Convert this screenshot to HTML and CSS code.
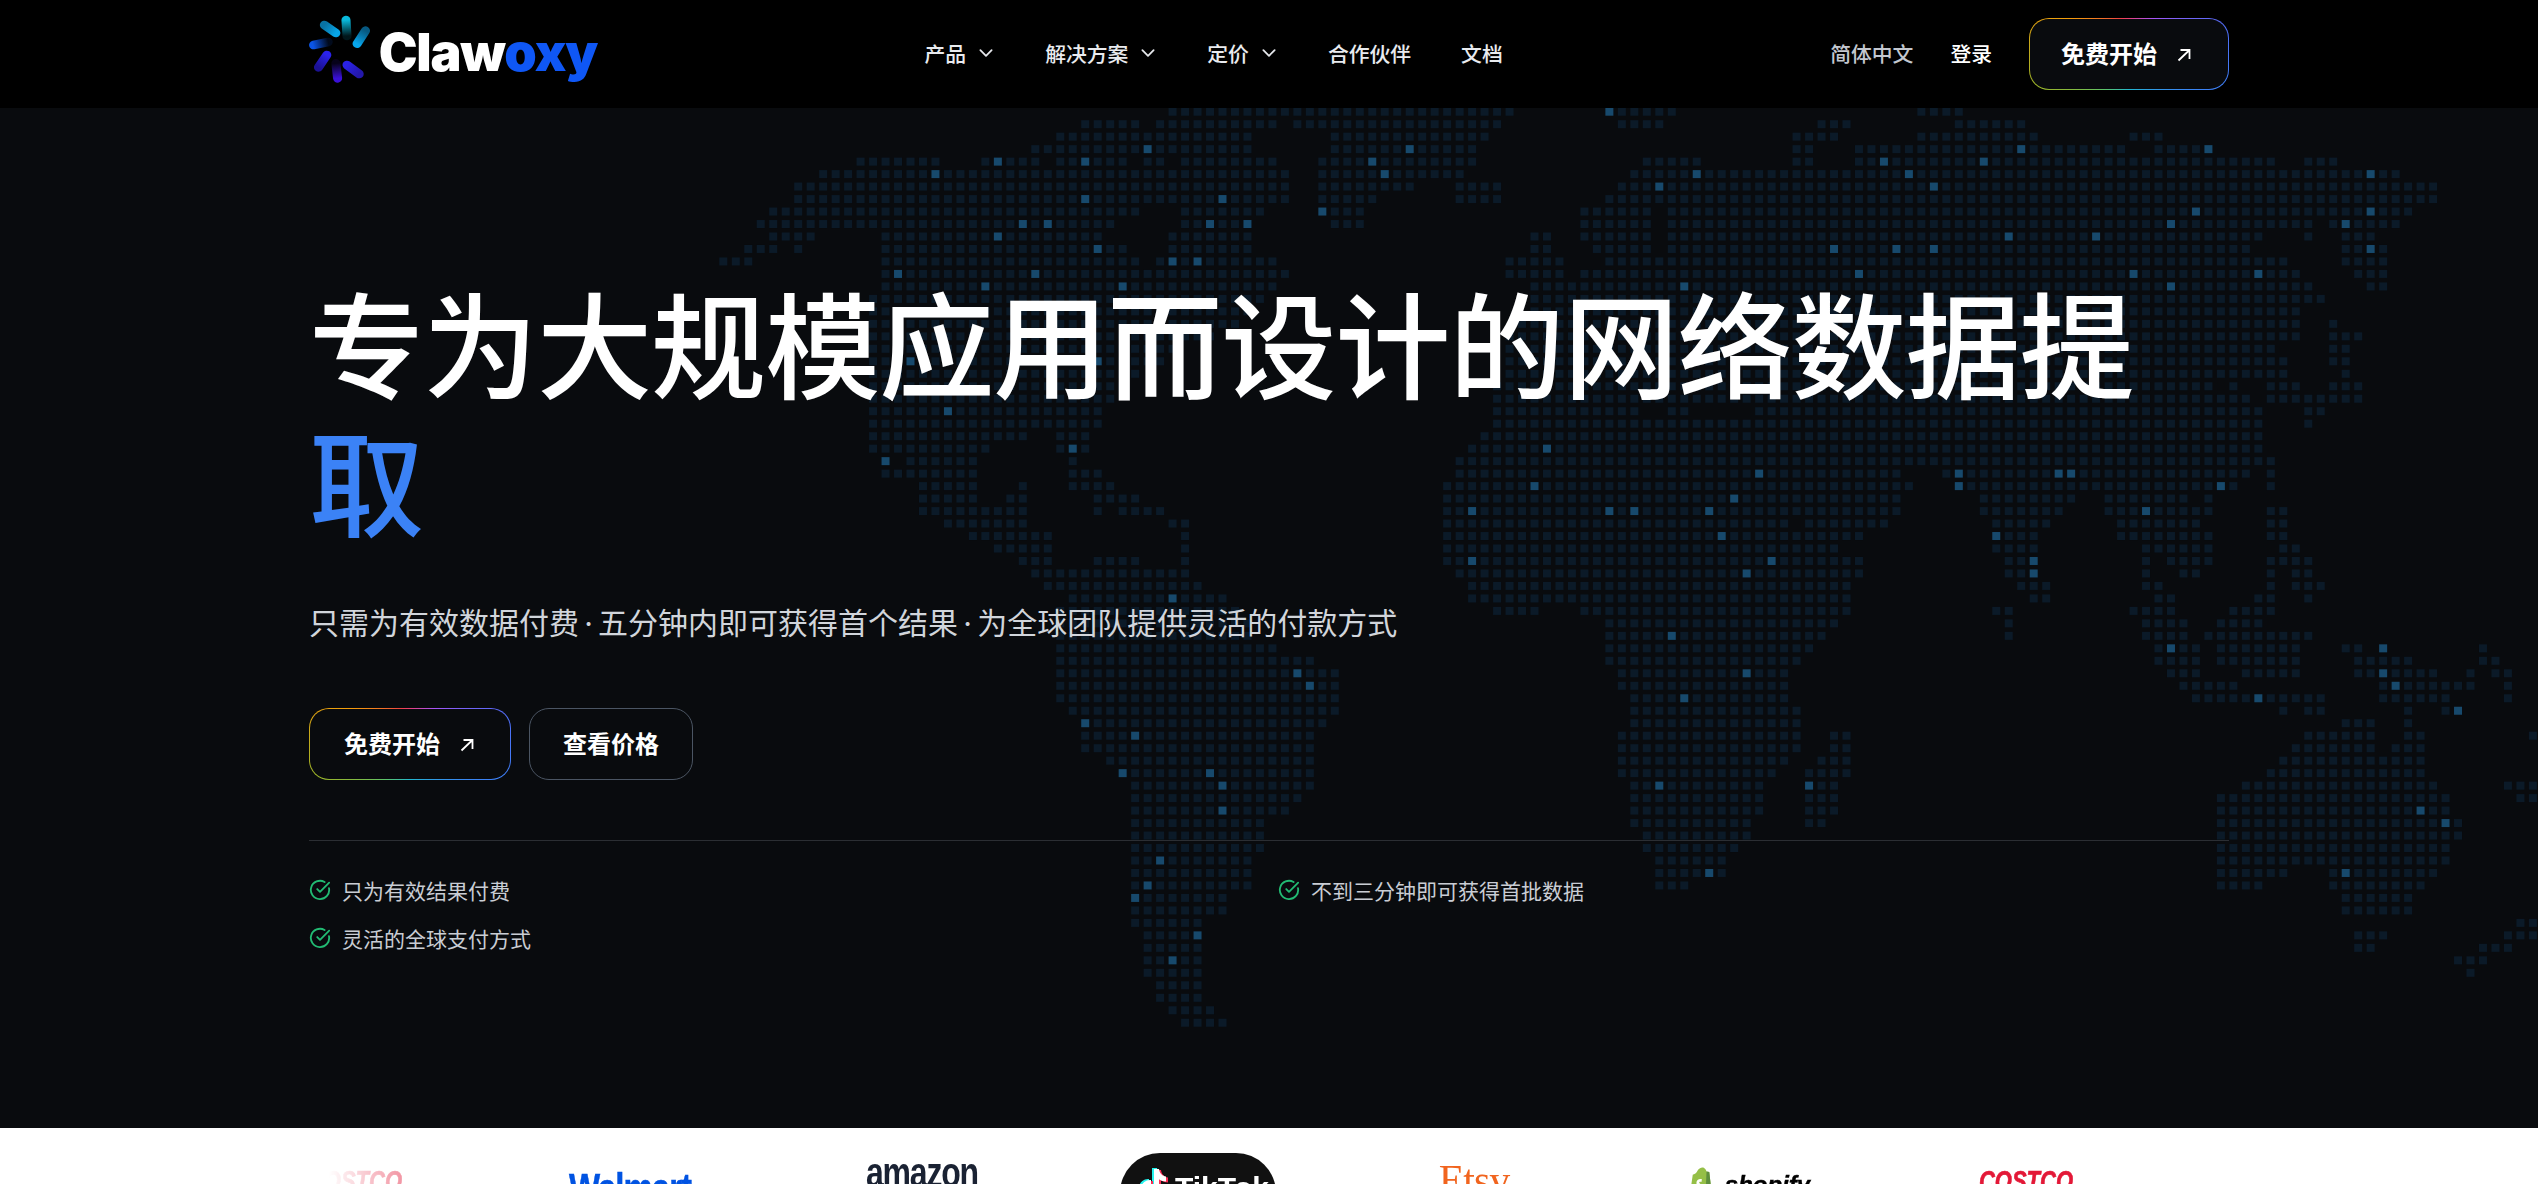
FILE: index.html
```html
<!DOCTYPE html>
<html lang="zh-CN">
<head>
    <meta charset="utf-8">
    <title>Clawoxy</title>
    <link rel="stylesheet" href="styles.css">
</head>
<body>
    <header class="topbar">
        <div class="wrap topbar-inner">
            <a class="brand" href="#">
                <svg class="brand-mark" viewBox="78 42 180 210" preserveAspectRatio="none">
                    <defs>
                        <linearGradient id="r1" gradientUnits="userSpaceOnUse" x1="187" y1="60" x2="190" y2="108"><stop offset="0" stop-color="#09b9dc"/><stop offset="1" stop-color="#09b9dc" stop-opacity=".12"/></linearGradient>
                        <linearGradient id="r2" gradientUnits="userSpaceOnUse" x1="219" y1="131" x2="243" y2="92"><stop offset="0" stop-color="#07a6ec"/><stop offset="1" stop-color="#0a7fb8" stop-opacity=".7"/></linearGradient>
                        <linearGradient id="r3" gradientUnits="userSpaceOnUse" x1="158" y1="99" x2="125" y2="75"><stop offset="0" stop-color="#07a6e8"/><stop offset="1" stop-color="#0a86c0" stop-opacity=".85"/></linearGradient>
                        <linearGradient id="r4" gradientUnits="userSpaceOnUse" x1="92" y1="135" x2="136" y2="125"><stop offset="0" stop-color="#0b55e6"/><stop offset="1" stop-color="#0b55e6" stop-opacity=".12"/></linearGradient>
                        <linearGradient id="r5" gradientUnits="userSpaceOnUse" x1="132" y1="165" x2="108" y2="202"><stop offset="0" stop-color="#2a22ee"/><stop offset="1" stop-color="#2216b8" stop-opacity=".8"/></linearGradient>
                        <linearGradient id="r6" gradientUnits="userSpaceOnUse" x1="163" y1="235" x2="158" y2="190"><stop offset="0" stop-color="#3a10d8"/><stop offset="1" stop-color="#3a10d8" stop-opacity=".12"/></linearGradient>
                        <linearGradient id="r7" gradientUnits="userSpaceOnUse" x1="190" y1="195" x2="225" y2="222"><stop offset="0" stop-color="#2a22e6"/><stop offset="1" stop-color="#2a1cc8" stop-opacity=".85"/></linearGradient>
                    </defs>
                    <g fill="none" stroke-width="26" stroke-linecap="round">
                        <path stroke="url(#r1)" d="M187 60 190 108"/>
                        <path stroke="url(#r2)" d="M219 131 243 92"/>
                        <path stroke="url(#r3)" d="M158 99 125 75"/>
                        <path stroke="url(#r4)" d="M94 135 136 126"/>
                        <path stroke="url(#r5)" d="M132 165 108 202"/>
                        <path stroke="url(#r6)" d="M163 235 158 190"/>
                        <path stroke="url(#r7)" d="M190 195 225 222"/>
                    </g>
                </svg>
                <span class="brand-name">Claw<span class="brand-accent">oxy</span></span>
            </a>
            <nav class="nav">
                <a class="nav-link" href="#">产品<svg class="chev" viewBox="0 0 16 16"><path d="M3 5.500 8 10.500 13 5.500"/></svg></a>
                <a class="nav-link" href="#">解决方案<svg class="chev" viewBox="0 0 16 16"><path d="M3 5.500 8 10.500 13 5.500"/></svg></a>
                <a class="nav-link" href="#">定价<svg class="chev" viewBox="0 0 16 16"><path d="M3 5.500 8 10.500 13 5.500"/></svg></a>
                <a class="nav-link" href="#">合作伙伴</a>
                <a class="nav-link" href="#">文档</a>
            </nav>
            <div class="top-actions">
                <a class="lang" href="#">简体中文</a>
                <a class="login" href="#">登录</a>
                <a class="btn btn-rainbow btn-dark" href="#">免费开始<svg class="arrow" viewBox="0 0 14 14"><path d="M1.500 12.500 12.500 2M3.500 2H12.500V11"/></svg></a>
            </div>
        </div>
    </header>

    <section class="hero">
        <svg class="world" id="world" width="2538" height="1020"></svg>
        <div class="wrap hero-inner">
            <h1 class="title">专为大规模应用而设计的网络数据提<span class="title-accent">取</span></h1>
            <p class="lead">只需为有效数据付费 · 五分钟内即可获得首个结果 · 为全球团队提供灵活的付款方式</p>
            <div class="cta">
                <a class="btn btn-rainbow" href="#">免费开始<svg class="arrow" viewBox="0 0 14 14"><path d="M1.500 12.500 12.500 2M3.500 2H12.500V11"/></svg></a>
                <a class="btn btn-outline" href="#">查看价格</a>
            </div>
            <ul class="perks">
                <li class="perk"><svg class="check" viewBox="0 0 24 24"><path d="M21.800 10A10 10 0 1 1 17 3.300"/><path d="m9 11 3 3L22 4"/></svg>只为有效结果付费</li>
                <li class="perk"><svg class="check" viewBox="0 0 24 24"><path d="M21.800 10A10 10 0 1 1 17 3.300"/><path d="m9 11 3 3L22 4"/></svg>不到三分钟即可获得首批数据</li>
                <li class="perk"><svg class="check" viewBox="0 0 24 24"><path d="M21.800 10A10 10 0 1 1 17 3.300"/><path d="m9 11 3 3L22 4"/></svg>灵活的全球支付方式</li>
            </ul>
        </div>
    </section>

    <section class="brands">
        <div class="wrap brands-window">
            <div class="brands-track">
                <div class="brand-cell cell-first"><span class="costco">COSTCO</span></div>
                <div class="brand-cell cell-walmart"><span class="walmart">Walmart</span></div>
                <div class="brand-cell"><span class="amazon">amazon</span></div>
                <div class="brand-cell">
                    <span class="tiktok">
                        <svg class="tiktok-note" viewBox="0 0 30 34">
                            <path fill="#25f4ee" d="M14 2h5c.5 4 3 7 7 7.500v5c-2.500 0-5-.8-7-2.200V22a9 9 0 1 1-8-9v5a4 4 0 1 0 3 4z"/>
                            <path fill="#fe2c55" d="M18 4h5c.5 4 3 7 7 7.500v5c-2.500 0-5-.8-7-2.200V24a9 9 0 1 1-8-9v5a4 4 0 1 0 3 4z"/>
                            <path fill="#fff" d="M16 3h5c.5 4 3 7 7 7.500v5c-2.500 0-5-.8-7-2.200V23a9 9 0 1 1-8-9v5a4 4 0 1 0 3 4z"/>
                        </svg>
                        <span class="tiktok-name">TikTok</span>
                    </span>
                </div>
                <div class="brand-cell"><span class="etsy">Etsy</span></div>
                <div class="brand-cell">
                    <span class="shopify">
                        <svg class="shopify-bag" viewBox="0 0 24 34">
                            <path fill="#95bf47" d="M3 9c3-1 4-2 5-4 1.500-3 5-4.500 7-3.500 1.500.8 2.500 2 3 4l3 .5L24 32 1 34 0 30z"/>
                            <path fill="#5e8e3e" d="M18 5.500 21 6l3 26-7 2z"/>
                            <path fill="#fff" d="M13 14c-3-1-6 1-6 4 0 3 4 3 4 5 0 1-2 1-3 0l-1 3c3 2 7 0 7-3 0-3-4-4-4-5.500 0-1 1.500-1 2.500-.5z"/>
                        </svg>
                        <span class="shopify-name">shopify</span>
                    </span>
                </div>
                <div class="brand-cell"><span class="costco">COSTCO</span></div>
            </div>
        </div>
    </section>
    <script src="map.js"></script>
</body>
</html>
```

FILE: styles.css
```css
*{
    box-sizing: border-box;
    margin: 0;
    padding: 0;
}
html, body{
    height: 100%;
    overflow: hidden;
}
body{
    background: #090b0e;
    color: #fff;
    font-family: Inter, "Noto Sans CJK SC", sans-serif;
}
a{
    color: inherit;
    text-decoration: none;
}
.wrap{
    width: 1920px;
    margin: 0 auto;
}

/* top bar */
.topbar{
    height: 108px;
    background: #000;
}
.topbar-inner{
    height: 100%;
    display: flex;
    align-items: center;
    justify-content: space-between;
}
.brand{
    display: flex;
    align-items: center;
    gap: 8px;
    width: 288px;
}
.brand-mark{
    width: 64px;
    height: 70px;
    margin-left: -1px;
    margin-top: -10px;
}
.brand-name{
    font-size: 52px;
    font-weight: 900;
    letter-spacing: -1.200px;
    line-height: 1;
    margin-top: -3px;
}
.brand-accent{
    color: #0f57f5;
}
.nav{
    display: flex;
    align-items: center;
    gap: 50px;
    margin-bottom: 2px;
}
.nav-link{
    display: flex;
    align-items: center;
    gap: 11px;
    font-size: 20.800px;
    font-weight: 500;
    color: #e9ebef;
}
.chev{
    width: 18px;
    height: 18px;
    fill: none;
    stroke: #e5e7eb;
    stroke-width: 1.600;
    stroke-linecap: round;
    stroke-linejoin: round;
}
.top-actions{
    display: flex;
    align-items: center;
}
.lang{
    font-size: 20.800px;
    font-weight: 500;
    color: #c3c7cf;
    margin-bottom: 2px;
}
.login{
    font-size: 20.800px;
    font-weight: 500;
    margin: 0 37px 2px;
}

/* buttons */
.btn{
    display: inline-flex;
    align-items: center;
    justify-content: center;
    height: 72px;
    padding: 0 36px 4px 34px;
    border-radius: 20px;
    border: 1px solid transparent;
    font-size: 24px;
    font-weight: 700;
}
.btn-rainbow{
    background:
        linear-gradient(#090b0e, #090b0e) padding-box,
        conic-gradient(#e8407a 0deg, #a855f7 35deg, #4f6ef7 75deg, #3b82f6 115deg, #22b8cf 180deg, #5cc46a 215deg, #9ab52a 250deg, #d9a514 285deg, #f59e0b 300deg, #ef4444 345deg, #e8407a 360deg) border-box;
}
.btn-dark{
    width: 200px;
    padding: 0 0 4px 31px;
    justify-content: flex-start;
}
.btn-outline{
    padding: 0 33px 4px;
    border-color: #4b5563;
}
.arrow{
    width: 14px;
    height: 14px;
    margin-left: 20px;
    margin-top: 5px;
    fill: none;
    stroke: #fff;
    stroke-width: 1.800;
}

/* hero */
.hero{
    position: relative;
    height: 1020px;
    overflow: hidden;
}
.world{
    position: absolute;
    top: 0;
    left: 0;
}
.dot{
    fill: #0b1a28;
}
.dot-hot{
    fill: #17496c;
}
.hero-inner{
    position: relative;
    padding-top: 171px;
}
.title{
    font-size: 115.200px;
    font-weight: 500;
    line-height: 1.200;
    letter-spacing: -.01em;
}
.title-accent{
    color: #3b82f6;
}
.lead{
    margin-top: 44px;
    font-size: 30px;
    line-height: 48px;
    word-spacing: -3.200px;
    color: #d1d5db;
}
.cta{
    display: flex;
    gap: 18px;
    margin-top: 61px;
}
.perks{
    list-style: none;
    display: grid;
    grid-template-columns: 1fr 1fr;
    gap: 20px 18px;
    margin-top: 60px;
    padding-top: 35px;
    border-top: 1px solid #2b2e33;
}
.perk{
    display: flex;
    align-items: center;
    gap: 11px;
    height: 28px;
    font-size: 21px;
    color: #c9cdd4;
}
.check{
    width: 22px;
    height: 22px;
    flex: none;
    fill: none;
    stroke: #22bb73;
    stroke-width: 2;
    stroke-linecap: round;
    stroke-linejoin: round;
}

/* logo strip */
.brands{
    background: #fff;
    height: 140px;
}
.brands-window{
    overflow: hidden;
    -webkit-mask-image: linear-gradient(90deg, transparent 20px, #000 180px);
    mask-image: linear-gradient(90deg, transparent 20px, #000 180px);
}
.brands-track{
    display: flex;
    margin-left: -77px;
}
.brand-cell{
    flex: none;
    width: 276px;
    height: 140px;
    display: flex;
    justify-content: center;
    align-items: flex-start;
}
.cell-first{
    padding-right: 30px;
}
.cell-walmart{
    padding-right: 32px;
}
.costco{
    margin-top: 37px;
    font-family: "Liberation Sans", sans-serif;
    font-size: 22px;
    font-weight: 700;
    font-style: italic;
    -webkit-text-stroke: .5px #e31837;
    color: #e31837;
    transform: scaleY(1.300);
    transform-origin: top;
}
.walmart{
    margin-top: 36px;
    font-family: "Liberation Sans", sans-serif;
    font-size: 33px;
    font-weight: 700;
    letter-spacing: -1px;
    -webkit-text-stroke: .4px #0053e2;
    color: #0053e2;
    transform: scaleY(1.250);
    transform-origin: top;
}
.amazon{
    margin-top: 21px;
    font-family: "Liberation Sans", sans-serif;
    font-size: 32px;
    font-weight: 700;
    letter-spacing: -1.200px;
    color: #1a2233;
    transform: scaleY(1.300);
    transform-origin: top;
}
.tiktok{
    display: flex;
    align-items: flex-start;
    gap: 7px;
    width: 156px;
    height: 100px;
    margin-top: 25px;
    padding: 13px 0 0 18px;
    background: #111;
    border-radius: 40px;
}
.tiktok-note{
    width: 30px;
    height: 34px;
    flex: none;
}
.tiktok-name{
    font-family: "Liberation Sans", sans-serif;
    font-size: 30px;
    font-weight: 700;
    line-height: 44px;
    color: #fff;
}
.etsy{
    padding-top: 28px;
    font-family: "Liberation Serif", serif;
    font-size: 42px;
    letter-spacing: -1px;
    color: #f1641e;
}
.shopify{
    display: flex;
    align-items: flex-start;
    gap: 13px;
    padding-top: 38px;
}
.shopify-bag{
    width: 22px;
    height: 32px;
    flex: none;
}
.shopify-name{
    font-family: "Liberation Sans", sans-serif;
    font-size: 24px;
    font-weight: 700;
    font-style: italic;
    -webkit-text-stroke: .4px #000;
    line-height: 34px;
    margin-top: 2px;
    color: #000;
}
```

FILE: map.js
```js
// dotted world map, one line per grid row: column runs
const rows = [
    "36-63 71-76 96-99",
    "29-33 35-44 46-62 72-75 88-90 99-104",
    "27-42 49-61 86-89 96-105 113-115",
    "25-42 49-60 86-87 91-112 115-119",
    "11-17 21-25 27-32 34-35 37-44 48-60 74-78 86-87 91-124 127-129",
    "8-45 48-59 73-134",
    "6-45 48-55 59-62 72-137",
    "6-45 48-52 59-62 71-137",
    "4-33 37-43 48-51 69-74 76-135",
    "3-31 37-42 49-51 69-74 76-127 129-134",
    "4-7 13-30 36-42 65-66 69-74 76-123 127 130-132",
    "2-4 6 13-32 36-42 65-66 70-74 76-122 130-133",
    "0-2 13-33 35-44 63-67 71-125 130-133",
    "13-45 63-67 69-126 131-133",
    "13-44 65-127 132-133",
    "12-43 65-128",
    "12-42 65-126",
    "12-41 64-126 129",
    "12-39 63-126 129-131",
    "12-36 63-124 129-130",
    "12-35 63-125 129-130",
    "12-33 63-125 130",
    "12-32 62-119 121 124-126 129-131",
    "12-31 62-122 124-131",
    "12-30 62-73 76-77 83-123 127-128",
    "12-30 62-123 127",
    "12-24 27-29 61-123",
    "12-21 27-29 60-123",
    "13 15-20 28 59-124",
    "13-20 28-30 59-94 98-122 124",
    "16-20 24 28-31 58-95 99-121 124",
    "16-20 23-24 30-33 58-94 101-108 111-117 119",
    "16-24 30 32-35 58-94 101-107 111-119 124-125",
    "18-24 36-37 58-85 87-93 102-106 112-118 124-125",
    "20-26 37 58-91 102-105 112-119 124-125",
    "22-26 37 58-89 102-105 114-119 125-126",
    "24-26 30-33 37 58-91 103-105 114 116-119 124-127",
    "25-37 59-91 103-105 114 117-118 124 126-127",
    "26-38 60-90 104-106 114-115 124 126-128",
    "28-40 60-90 105-106 115-116 123-124 127",
    "27-41 62-65 69-90 102-103 113-116 121-124",
    "27-42 71-89 103 114-117 120-123",
    "27-42 71-88 103 114-117 119-127",
    "27-44 71-87 115-118 120-126 130-131 133 141",
    "27-47 71-86 115-118 120-126 131-135 141-142",
    "27-49 72-85 116-118 122-126 131-137 140 142-143",
    "27-49 72-85 117-121 133-140 143",
    "27-49 73-85 118-128 133-138 143",
    "28-49 73-86 125 127-128 135 138-139",
    "29-48 73-86 130-132 135",
    "29-47 72-86 89-90 127-132 135-136 145",
    "29-47 72-86 89-90 126-132 134-136",
    "31-47 72-85 88-90 125-136",
    "32-47 72-84 87-90 124-136",
    "33-47 73-83 87-89 122-137 143-145",
    "33-46 73-83 87-89 120-138 144-145",
    "33-45 73-83 87-89 120-138",
    "33-43 73-82 87-88 120-139",
    "33-43 74-82 120-139",
    "33-43 74-81 120-138",
    "33-42 75-80 120-138",
    "33-42 75-80 120-125 129-137",
    "33-42 75-77 120-123 129-136",
    "33-40 130-135",
    "33-40 130-135",
    "33-38 144-145",
    "34-38 131-133 143-145",
    "34-38 131-132 141-143",
    "34-38 139-141",
    "34-38 140",
    "35-38",
    "35-38",
    "36-39",
    "37-40"
];

// brighter cells, row: columns
const hot = {
    0: [71], 3: [34, 55, 104, 119], 4: [22, 29, 52, 93, 101], 5: [17, 53, 78, 95, 132],
    6: [75, 97], 7: [29, 40], 8: [48, 118, 132], 9: [24, 26, 39, 42, 116, 130],
    10: [22, 103, 110], 11: [30, 89, 94, 97, 132], 12: [36, 38], 13: [14, 25, 91, 113, 123],
    14: [21, 32, 77, 116], 20: [15, 30], 24: [18], 27: [28, 66], 28: [13],
    29: [83, 99, 107, 108], 30: [65, 99, 120], 31: [81], 32: [60, 71, 73, 79, 114],
    34: [80, 102], 36: [60, 84, 105], 37: [82, 105], 39: [36], 42: [76], 43: [116, 133],
    45: [46, 82, 133], 46: [47, 134], 47: [77, 123], 48: [139], 49: [29], 50: [33],
    53: [32, 39], 54: [40, 75, 87], 56: [40, 136], 57: [138], 60: [35], 61: [79, 130],
    62: [34], 63: [33], 66: [38], 68: [36]
};

const pitch = 12.48;
const left = 719.3;
const top_ = -0.3;
let html = "";

rows.forEach((row, r) => {
    row.split(" ").forEach(run => {
        const parts = run.split("-").map(Number);
        const end = parts.length > 1 ? parts[1] : parts[0];
        for (let c = parts[0]; c <= end; c++) {
            const isHot = hot[r] && hot[r].includes(c);
            const x = (left + c * pitch).toFixed(2);
            const y = (top_ + r * pitch).toFixed(2);
            html += `<rect class="${isHot ? "dot-hot" : "dot"}" x="${x}" y="${y}" width="8" height="8"/>`;
        }
    });
});

document.getElementById("world").innerHTML = html;
```
